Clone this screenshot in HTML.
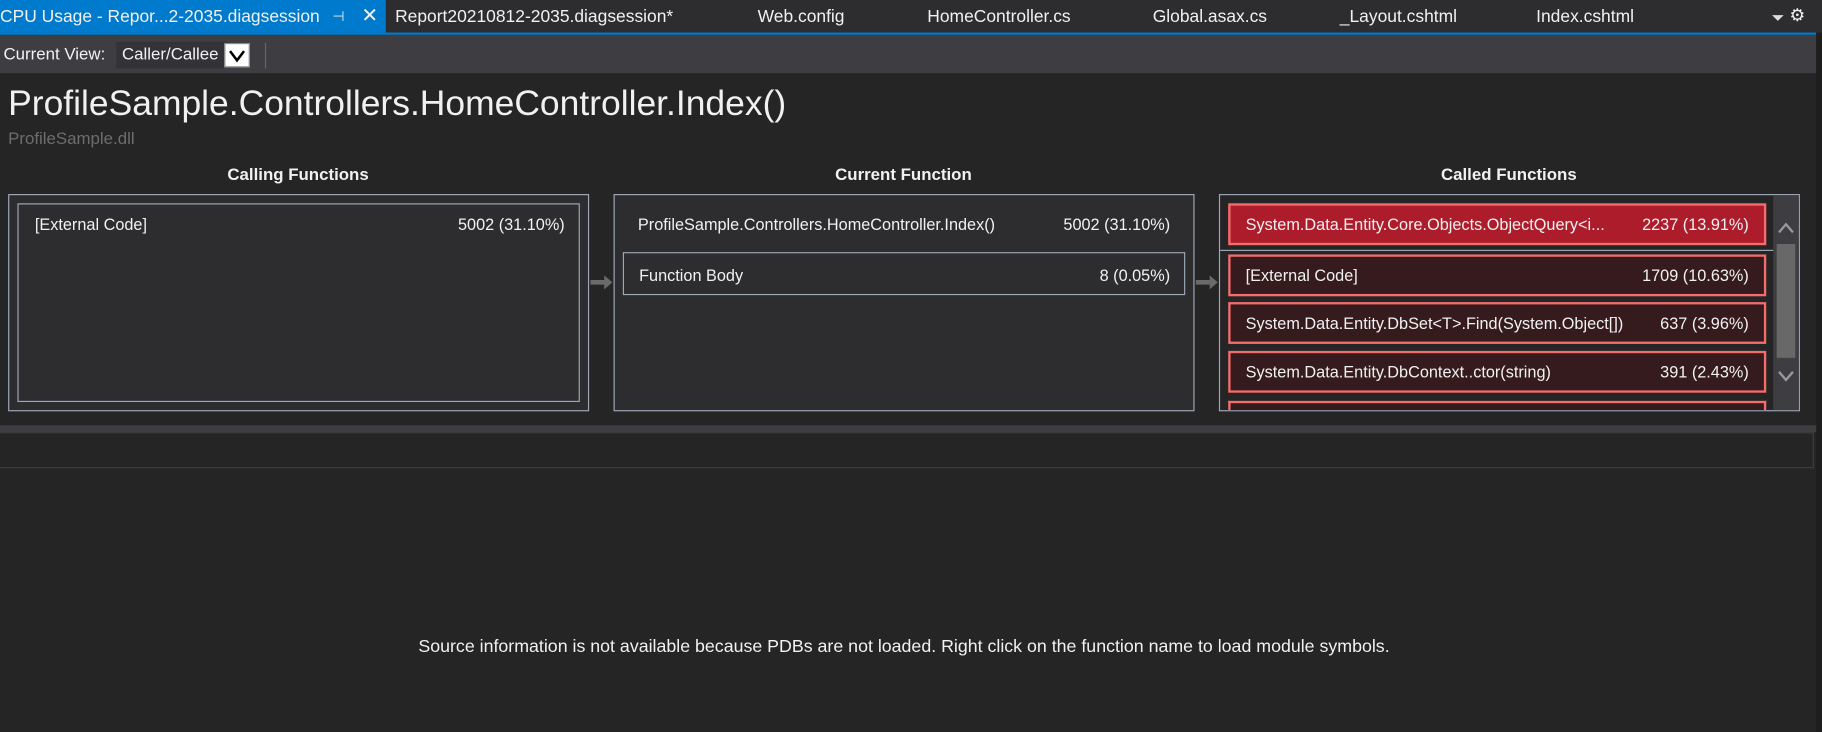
<!DOCTYPE html>
<html><head><meta charset="utf-8"><style>
html,body{margin:0;padding:0;background:#252526;overflow:hidden}
body{width:1822px;height:732px}
#w{position:absolute;left:0;top:0;width:1568px;height:630px;transform:scale(1.16199,1.16190);transform-origin:0 0;font-family:"Liberation Sans",sans-serif;color:#f1f1f1;font-size:14px;background:#252526}
.a{position:absolute;white-space:nowrap}
.box{position:absolute;border:1.5px solid #a0a8b8;background:#2d2d30;box-sizing:border-box}
.it{position:absolute;box-sizing:border-box;border:2px solid #f36d6d;background:#351b1e}
.it span{position:absolute;top:8px}
</style></head><body><div id="w">
<div class="a" style="left:0;top:0;width:1568px;height:28px;background:#2d2d30"></div>
<div class="a" style="left:0;top:0;width:332px;height:28px;background:#007acc"></div>
<div class="a" style="left:0;top:28px;width:1563px;height:2px;background:#007acc"></div>
<div class="a" style="left:1;top:6px;font-size:15px">CPU Usage - Repor...2-2035.diagsession</div>
<div class="a" style="left:286px;top:7px;font-size:12px">⊣</div>
<div class="a" style="left:311px;top:4px;font-size:17px">✕</div>
<div class="a" style="left:340px;top:6px;font-size:15px">Report20210812-2035.diagsession*</div>
<div class="a" style="left:652px;top:6px;font-size:15px">Web.config</div>
<div class="a" style="left:798px;top:6px;font-size:15px">HomeController.cs</div>
<div class="a" style="left:992px;top:6px;font-size:15px">Global.asax.cs</div>
<div class="a" style="left:1153px;top:6px;font-size:15px">_Layout.cshtml</div>
<div class="a" style="left:1322px;top:6px;font-size:15px">Index.cshtml</div>
<div class="a" style="left:1525px;top:13px;width:0;height:0;border-left:5px solid transparent;border-right:5px solid transparent;border-top:5px solid #ddd"></div>
<div class="a" style="left:1540px;top:4px;font-size:15px">⚙</div>
<div class="a" style="left:0;top:30px;width:1563px;height:33px;background:#3e3e42"></div>
<div class="a" style="left:3px;top:39px;font-size:14.5px">Current View:</div>
<div class="a" style="left:100px;top:36px;width:94px;height:23px;background:#333337"></div>
<div class="a" style="left:105px;top:39px;font-size:14.5px">Caller/Callee</div>
<div class="a" style="left:193px;top:37px;width:22px;height:21px;background:#fff;border:1px solid #888;box-sizing:border-box;color:#000;text-align:center;font-size:14px;line-height:19px">
<svg width="14" height="12" viewBox="0 0 14 12" style="margin-top:4px"><path d="M1 2 L7 10 L13 2" stroke="#000" stroke-width="2.2" fill="none"/></svg></div>
<div class="a" style="left:228px;top:37px;width:1px;height:22px;background:#666"></div>
<div class="a" style="left:1563px;top:28px;width:5px;height:602px;background:#1e1e1e"></div>
<div class="a" style="left:7px;top:72px;font-size:30.5px">ProfileSample.Controllers.HomeController.Index()</div>
<div class="a" style="left:7px;top:112px;font-size:14.5px;color:#6d6d6d">ProfileSample.dll</div>
<div class="a" style="left:7px;top:143px;width:499px;text-align:center;font-weight:bold;font-size:14.5px">Calling Functions</div>
<div class="a" style="left:528px;top:143px;width:499px;text-align:center;font-weight:bold;font-size:14.5px">Current Function</div>
<div class="a" style="left:1049px;top:143px;width:499px;text-align:center;font-weight:bold;font-size:14.5px">Called Functions</div>
<div class="box" style="left:7px;top:167px;width:500px;height:187px"></div>
<div class="box" style="left:15px;top:175px;width:484px;height:171px"></div>
<div class="a" style="left:30px;top:185px">[External Code]</div>
<div class="a" style="right:1082px;top:185px">5002 (31.10%)</div>
<div class="box" style="left:528px;top:167px;width:500px;height:187px"></div>
<div class="a" style="left:549px;top:185px">ProfileSample.Controllers.HomeController.Index()</div>
<div class="a" style="right:561px;top:185px">5002 (31.10%)</div>
<div class="box" style="left:536px;top:217px;width:484px;height:37px"></div>
<div class="a" style="left:550px;top:229px">Function Body</div>
<div class="a" style="right:561px;top:229px">8 (0.05%)</div>
<svg class="a" style="left:508px;top:236px" width="20" height="14"><path d="M0 5h12V1l7 6-7 6V9H0z" fill="#6a6a6a"/></svg>
<svg class="a" style="left:1029px;top:236px" width="20" height="14"><path d="M0 5h12V1l7 6-7 6V9H0z" fill="#6a6a6a"/></svg>
<div class="box" style="left:1049px;top:167px;width:500px;height:187px;background:#252526"></div>
<div class="a" style="left:1526px;top:168px;width:22px;height:185px;background:#3e3e42"></div>
<div class="a" style="left:1529px;top:210px;width:16px;height:98px;background:#686868"></div>
<svg class="a" style="left:1529px;top:190px" width="16" height="12"><path d="M2 10L8 3l6 7" stroke="#999" stroke-width="2" fill="none"/></svg>
<svg class="a" style="left:1529px;top:318px" width="16" height="12"><path d="M2 2l6 7 6-7" stroke="#999" stroke-width="2" fill="none"/></svg>
<div class="a" style="left:1050px;top:215px;width:476px;height:1px;background:#a0a8b8"></div>
<div class="it" style="left:1057px;top:175px;width:463px;height:36px;background:#ad1c2b"><span style="left:13px">System.Data.Entity.Core.Objects.ObjectQuery&lt;i...</span><span style="right:13px">2237 (13.91%)</span></div>
<div class="it" style="left:1057px;top:219px;width:463px;height:36px"><span style="left:13px">[External Code]</span><span style="right:13px">1709 (10.63%)</span></div>
<div class="it" style="left:1057px;top:260px;width:463px;height:36px"><span style="left:13px">System.Data.Entity.DbSet&lt;T&gt;.Find(System.Object[])</span><span style="right:13px">637 (3.96%)</span></div>
<div class="it" style="left:1057px;top:302px;width:463px;height:36px"><span style="left:13px">System.Data.Entity.DbContext..ctor(string)</span><span style="right:13px">391 (2.43%)</span></div>
<div class="it" style="left:1057px;top:345px;width:463px;height:8px;border-bottom:none"></div>
<div class="a" style="left:0;top:366px;width:1563px;height:6px;background:#3e3e42"></div>
<div class="a" style="left:0;top:372px;width:1561px;height:31px;border:1px solid #3e3e42;border-left:none;box-sizing:border-box"></div>
<div class="a" style="left:0;top:548px;width:1556px;text-align:center;font-size:15.3px">Source information is not available because PDBs are not loaded. Right click on the function name to load module symbols.</div>
</div></body></html>
